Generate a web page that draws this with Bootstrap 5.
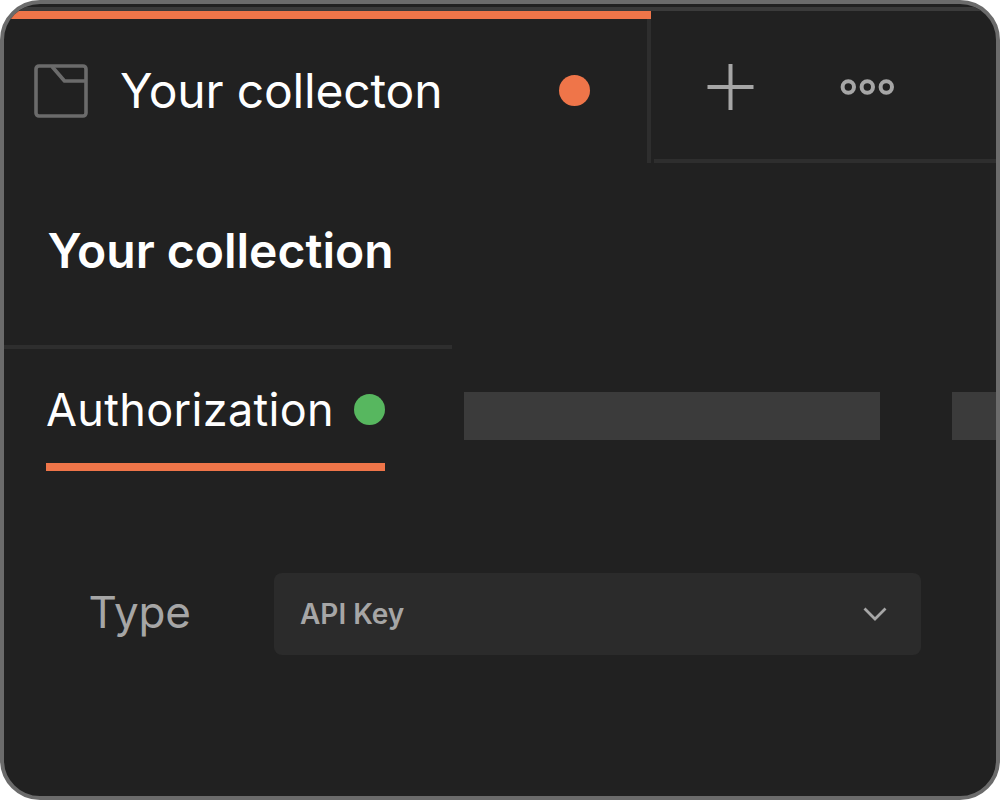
<!DOCTYPE html>
<html lang="en">
<head>
<meta charset="utf-8">
<meta name="viewport" content="width=device-width, initial-scale=1">
<title>Your collection</title>
<link rel="stylesheet" href="https://cdn.jsdelivr.net/npm/bootstrap@5.3.0/dist/css/bootstrap.min.css">
<style>
body{font-family:Inter,"Liberation Sans",sans-serif;background:#fff;color:#fff}
.app-frame{width:1000px;height:800px;background:#212121;border:4px solid #6b6b6b;border-radius:40px}
.top-line{height:4px;margin-top:3px;background:#3b3b3b}
.tab-strip{height:152px}
.open-tab{width:647px;border-top:8px solid #ef7549;padding:0 61px 1px 30px}
.tab-name{font-size:48px;line-height:58px;margin-left:32px;letter-spacing:-.18px;padding-top:1px}
.dot{width:31px;height:31px;border-radius:50%}
.dot-orange{background:#ef7549}
.dot-green{background:#57b75f}
.tab-edge{width:4px;margin-top:8px;margin-left:-4px;background:#2e2e2e}
.tab-tools{margin-left:3px;border-bottom:4px solid #2e2e2e;padding:4px 0 0 53px}
.more-icon{margin-left:86px}
.page-title{height:182px;padding:0 0 6px 43.500px;font-size:48px;line-height:58px;font-weight:600}
.title-rule{width:448px;height:4px;background:#2e2e2e}
.section-tabs{height:122px;padding-left:42px}
.section-active{width:338.500px;border-bottom:8px solid #ef7549;padding-top:7px}
.section-name{font-size:45px;line-height:54px;letter-spacing:.32px}
.stub{height:48px;background:#3b3b3b;margin-top:43px}
.stub-wide{width:416px;margin-left:79.500px}
.stub-cut{width:44px;margin-left:72px}
.type-row{margin-top:102px;padding-left:84.500px}
.type-label{width:185.500px;font-size:44px;line-height:54px;padding-bottom:4px;letter-spacing:-.2px;color:#a6a6a6}
.type-select{width:647px;height:82px;border-radius:8px;background:#2b2b2b;color:#a6a6a6;font-size:28px;font-weight:600;padding:0 34px 0 26px}
</style>
</head>
<body>
<main class="app-frame overflow-hidden d-flex flex-column">
  <div class="top-line flex-shrink-0"></div>
  <nav class="tab-strip d-flex flex-shrink-0">
    <div class="open-tab d-flex align-items-center flex-shrink-0">
      <svg width="54" height="54" viewBox="0 0 54 54" fill="none" stroke="#6b6b6b" stroke-width="3.6" stroke-linejoin="round"><rect x="2" y="2" width="50" height="50" rx="3"/><path d="M18 2.500L30.500 17H52"/></svg>
      <span class="tab-name text-nowrap">Your collecton</span>
      <span class="dot dot-orange ms-auto"></span>
    </div>
    <div class="tab-edge flex-shrink-0"></div>
    <div class="tab-tools d-flex align-items-center flex-grow-1">
      <svg width="47" height="46" viewBox="0 0 47 46" fill="none" stroke="#a6a6a6" stroke-width="4"><path d="M0.500 23H46.500M23.500 0V46"/></svg>
      <svg class="more-icon" width="54" height="16" viewBox="0 0 54 16" fill="none" stroke="#a6a6a6" stroke-width="4"><circle cx="8.300" cy="8" r="5.700"/><circle cx="27.300" cy="8" r="5.700"/><circle cx="46.300" cy="8" r="5.700"/></svg>
    </div>
  </nav>
  <h1 class="page-title d-flex align-items-center m-0 flex-shrink-0">Your collection</h1>
  <div class="title-rule flex-shrink-0"></div>
  <div class="section-tabs d-flex flex-shrink-0">
    <div class="section-active d-flex align-items-center justify-content-between flex-shrink-0">
      <span class="section-name">Authorization</span>
      <span class="dot dot-green"></span>
    </div>
    <div class="stub stub-wide flex-shrink-0"></div>
    <div class="stub stub-cut flex-shrink-0"></div>
  </div>
  <div class="type-row d-flex align-items-center">
    <span class="type-label">Type</span>
    <div class="type-select d-flex align-items-center justify-content-between" role="button">
      <span>API Key</span>
      <svg width="24" height="14" viewBox="0 0 24 14" fill="none" stroke="#a6a6a6" stroke-width="2.800"><path d="M1.500 1.500L12 12L22.500 1.500"/></svg>
    </div>
  </div>
</main>
<script src="https://cdn.jsdelivr.net/npm/bootstrap@5.3.0/dist/js/bootstrap.bundle.min.js"></script>
</body>
</html>
